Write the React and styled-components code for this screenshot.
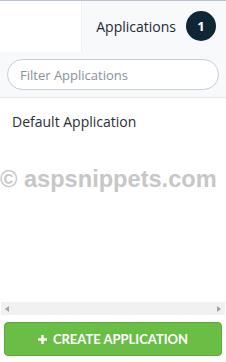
import React from 'react'
import styled, { createGlobalStyle } from 'styled-components'

const Global = createGlobalStyle`
  html, body {
    margin: 0;
    padding: 0;
    background: #ffffff;
  }
  body {
    font-family: 'Open Sans', 'Liberation Sans', sans-serif;
  }
`

const Panel = styled.div`
  position: relative;
  width: 226px;
  height: 362px;
  display: flex;
  flex-direction: column;
  border-top: 1px solid #b7c3d3;
  box-sizing: border-box;
  overflow: hidden;
`

const Header = styled.div`
  display: flex;
  height: 51px;
  background: #f7f9fb;
`

const BlankTab = styled.div`
  width: 81px;
  background: #ffffff;
  border-right: 1px solid #eef1f4;
`

const TitleTab = styled.div`
  flex: 1;
  display: flex;
  align-items: center;
  justify-content: flex-end;
  gap: 10px;
  padding-right: 10px;
  margin-top: -1px;
`

const Title = styled.span`
  font-size: 14px;
  color: #1f2a35;
`

const Badge = styled.span`
  width: 30px;
  height: 30px;
  border-radius: 50%;
  background: #0e2636;
  color: #ffffff;
  font-size: 13px;
  font-weight: 700;
  display: flex;
  align-items: center;
  justify-content: center;
`

const FilterBar = styled.div`
  height: 46px;
  background: #f7f9fb;
  border-bottom: 1px solid #e3e8ee;
  padding: 7px 7px 0 7px;
  box-sizing: border-box;
`

const FilterInput = styled.input`
  width: 212px;
  height: 31px;
  box-sizing: border-box;
  border: 1px solid #c9ced4;
  border-radius: 16px;
  background: #ffffff;
  padding: 0 12px;
  font-family: 'Open Sans', 'Liberation Sans', sans-serif;
  font-size: 13px;
  color: #333;
  outline: none;
  &::placeholder {
    color: #8a9098;
  }
`

const List = styled.div`
  flex: 1;
  padding: 14px 12px 0 12px;
`

const Item = styled.div`
  font-size: 14px;
  color: #2b2f33;
`

const Watermark = styled.div`
  position: absolute;
  left: 0;
  top: 165px;
  font-family: 'Liberation Sans', Arial, sans-serif;
  font-weight: 700;
  font-size: 23.6px;
  color: #c7c7c7;
  white-space: nowrap;
`

const ScrollTrack = styled.div`
  height: 13px;
  margin: 0 1px;
  background: #f1f1f1;
  display: flex;
  align-items: center;
  justify-content: space-between;
  padding: 0 4px;
`

const Arrow = styled.span`
  width: 0;
  height: 0;
  border-top: 3.5px solid transparent;
  border-bottom: 3.5px solid transparent;
  ${p => p.dir === 'left'
    ? 'border-right: 4px solid #a3a3a3;'
    : 'border-left: 4px solid #a3a3a3;'}
`

const Footer = styled.div`
  padding: 7px 4px 6px 4px;
`

const CreateBtn = styled.button`
  width: 100%;
  height: 34px;
  background: #6abd45;
  border: 1px solid #5aa939;
  border-radius: 4px;
  color: #ffffff;
  font-family: Lato, 'Open Sans', sans-serif;
  font-weight: 700;
  font-size: 13px;
  display: flex;
  align-items: center;
  justify-content: center;
  gap: 6px;
  cursor: pointer;
`

const Plus = styled.svg`
  width: 9px;
  height: 9px;
`

export default function App() {
  return (
    <>
      <Global />
      <Panel>
        <Header>
          <BlankTab />
          <TitleTab>
            <Title>Applications</Title>
            <Badge>1</Badge>
          </TitleTab>
        </Header>
        <FilterBar>
          <FilterInput placeholder="Filter Applications" />
        </FilterBar>
        <List>
          <Item>Default Application</Item>
        </List>
        <ScrollTrack>
          <Arrow dir="left" />
          <Arrow dir="right" />
        </ScrollTrack>
        <Footer>
          <CreateBtn>
            <Plus viewBox="0 0 9 9">
              <path d="M3.3 0h2.4v3.3H9v2.4H5.7V9H3.3V5.7H0V3.3h3.3z" fill="#ffffff" />
            </Plus>
            CREATE APPLICATION
          </CreateBtn>
        </Footer>
        <Watermark>© aspsnippets.com</Watermark>
      </Panel>
    </>
  )
}
